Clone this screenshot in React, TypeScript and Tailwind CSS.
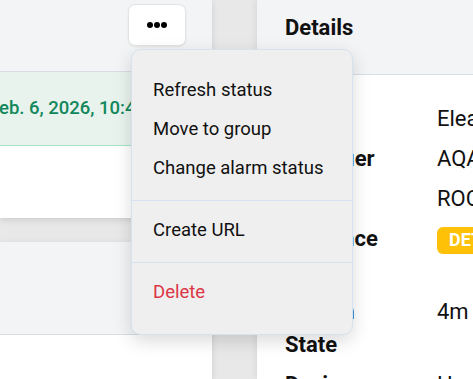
import React from 'react';

const rows = [
  { label: 'Name', value: 'Eleanor Station 4', h: 'h-[40px]' },
  { label: 'Identifier', value: 'AQA-20931-X', h: 'h-[40px]' },
  { label: 'Site', value: 'ROCKFORD', h: 'h-[40px]' },
  { label: 'Presence', value: 'badge', h: 'h-[73px]' },
  { label: 'Motion State', value: '4m ago', h: 'h-[73px]' },
  { label: 'Device', value: 'Healthy', h: 'h-[40px]' },
];

const MenuItem = ({ children, danger }: { children: React.ReactNode; danger?: boolean }) => (
  <div
    className={`h-[39px] flex items-center pl-[21px] text-[18.5px] ${danger ? 'text-[#dc3545]' : 'text-[#111]'}`}
  >
    {children}
  </div>
);

const App = () => {
  return (
    <div className="relative w-[473px] h-[379px] overflow-hidden flex gap-[45px] bg-[#e8e8e8] font-['Roboto',sans-serif]">
      {/* Left list */}
      <div className="w-[212px] shrink-0 flex flex-col gap-[24px]">
        <div className="bg-white shadow-[0_2px_6px_rgba(0,0,0,0.12)]">
          <div className="h-[72px] bg-[#f3f4f6] border-b border-[#d9dde3] flex justify-end items-start pt-[5px] pr-[27px]">
            <button className="w-[56px] h-[40px] bg-white rounded-[6px] shadow-[0_0_0_1px_#e3e3e3,0_1px_3px_rgba(0,0,0,0.15)] flex items-center justify-center gap-[1px]">
              <span className="w-[6px] h-[6px] rounded-full bg-black" />
              <span className="w-[6px] h-[6px] rounded-full bg-black" />
              <span className="w-[6px] h-[6px] rounded-full bg-black" />
            </button>
          </div>
          <div className="h-[74px] bg-[#e8f3ed] border-b border-[#a6e4c9] flex items-center overflow-hidden">
            <span className="whitespace-nowrap ml-[-11px] text-[18.5px] font-medium text-[#12875b]">
              Feb. 6, 2026, 10:45 AM
            </span>
          </div>
          <div className="h-[72px]" />
        </div>
        <div className="bg-white flex-1 shadow-[0_2px_6px_rgba(0,0,0,0.12)]">
          <div className="h-[93px] bg-[#f3f4f6] border-b border-[#d9dde3]" />
        </div>
      </div>

      {/* Right details panel */}
      <div className="flex-1 bg-white shadow-[-2px_0_6px_rgba(0,0,0,0.06)]">
        <div className="h-[75px] bg-[#f3f4f6] border-b border-[#d9dde3] pl-[28px] pt-[14px]">
          <h2 className="text-[22px] leading-[28px] font-bold text-[#111]">Details</h2>
        </div>
        <div className="pl-[28px] pt-[24px] text-[22px] text-[#111]">
          {rows.map(r => (
            <div key={r.label} className={`${r.h} grid grid-cols-[110px_1fr] gap-x-[42px] items-start`}>
              <div className="font-bold leading-[33px] pt-[3px]">{r.label}</div>
              <div className="whitespace-nowrap leading-[33px] pt-[3px]">
                {r.value === 'badge' ? (
                  <span className="inline-flex items-center h-[27px] px-[12px] rounded-[6px] bg-[#ffc107] text-white font-bold text-[18px] leading-none">
                    DETECTED
                  </span>
                ) : (
                  r.value
                )}
              </div>
            </div>
          ))}
        </div>
      </div>

      {/* Dropdown menu */}
      <div className="absolute left-[131px] top-[49px] w-[222px] h-[286px] bg-[#efefef] border border-[#d6e2f0] rounded-[10px] shadow-[0_6px_18px_rgba(0,0,0,0.15)] pt-[21px]">
        <MenuItem>Refresh status</MenuItem>
        <MenuItem>Move to group</MenuItem>
        <MenuItem>Change alarm status</MenuItem>
        <div className="mt-[12px] mb-[10px] border-t border-[#d6e2f0]" />
        <MenuItem>Create URL</MenuItem>
        <div className="mt-[12px] mb-[10px] border-t border-[#d6e2f0]" />
        <MenuItem danger>Delete</MenuItem>
      </div>
    </div>
  );
};

export default App;
